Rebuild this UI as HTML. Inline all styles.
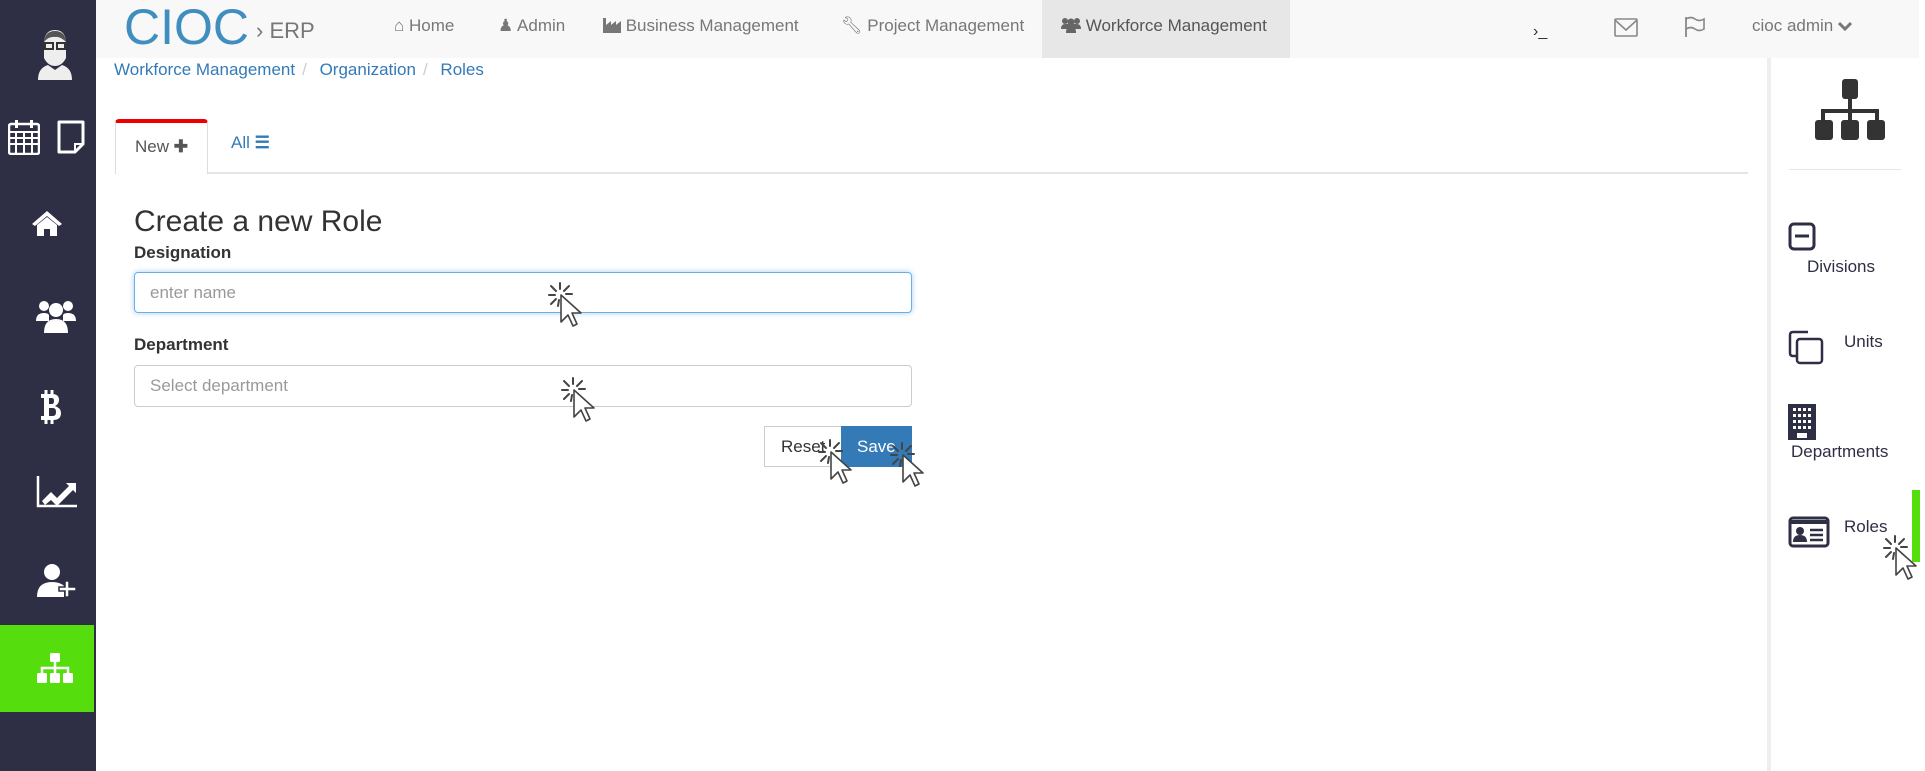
<!DOCTYPE html>
<html><head><meta charset="utf-8"><style>
*{box-sizing:border-box;margin:0;padding:0}
body{width:1925px;height:771px;position:relative;overflow:hidden;background:#fff;font-family:"Liberation Sans",sans-serif;color:#333}
.abs{position:absolute}
#side{left:0;top:0;width:96px;height:771px;background:#2e2e44}
#top{left:96px;top:0;width:1823px;height:58px;background:#f8f8f8}
.nav{position:absolute;top:0;height:58px;line-height:52px;font-size:17px;color:#777;white-space:nowrap}
.bc{top:60px;left:114px;font-size:17px;color:#337ab7}
.bc span{color:#ccc;margin:0 8px 0 7px}
.inp{border:1px solid #ccc;border-radius:4px;font-size:17px;color:#999;padding-left:15px;line-height:39px}
.lbl{font-weight:bold;font-size:17px;color:#333}
.rt{font-size:17px;color:#2e2e44}
</style></head><body>
<div id="side" class="abs"></div>
<div class="abs" style="left:0;top:625px;width:94px;height:87px;background:#55dd0e"></div>
<svg class="abs" style="left:36px;top:28px" width="38" height="52" viewBox="0 0 38 52"><path d="M8 16 Q8 2 19 2 Q30 2 30 16 L30 30 Q26 38 19 38 Q12 38 8 30Z" fill="#eee"/><path d="M8 14 Q9 3 19 3 Q29 3 30 14 Q24 8 19 9 Q13 8 8 14Z" fill="#555"/><rect x="9" y="15" width="8" height="6" fill="none" stroke="#333" stroke-width="2"/><rect x="21" y="15" width="8" height="6" fill="none" stroke="#333" stroke-width="2"/><path d="M2 52 Q2 40 12 37 L19 42 L26 37 Q36 40 36 52Z" fill="#eee"/></svg>
<svg class="abs" style="left:8px;top:119px" width="32" height="36" viewBox="0 0 32 36"><rect x="1" y="5" width="30" height="30" rx="2" fill="none" stroke="#fff" stroke-width="2.5"/><rect x="7" y="1" width="3" height="8" fill="#fff"/><rect x="22" y="1" width="3" height="8" fill="#fff"/><path d="M1 13H31M1 19H31M1 25H31M8 13V35M16 13V35M24 13V35" stroke="#fff" stroke-width="2"/></svg>
<svg class="abs" style="left:56px;top:120px" width="30" height="34" viewBox="0 0 30 34"><path d="M3 2H27V24L19 32H3Z" fill="none" stroke="#fff" stroke-width="3" stroke-linejoin="round"/><path d="M19 32V24H27" fill="none" stroke="#fff" stroke-width="2"/></svg>
<svg class="abs" style="left:31px;top:209px" width="32" height="28" viewBox="0 0 32 28"><path d="M16 2 L1 15 L4 17 L16 7 L28 17 L31 15Z" fill="#fff"/><path d="M6 16 L16 8 L26 16 V27 H19 V20 H13 V27 H6Z" fill="#fff"/></svg>
<svg class="abs" style="left:36px;top:299px" width="40" height="36" viewBox="0 0 40 36"><circle cx="8" cy="7" r="5" fill="#fff"/><circle cx="32" cy="7" r="5" fill="#fff"/><circle cx="20" cy="11" r="7" fill="#fff"/><path d="M0 22 Q0 14 8 14 Q12 14 13 16 L13 22Z M40 22 Q40 14 32 14 Q28 14 27 16 L27 22Z" fill="#fff"/><path d="M8 34 Q8 20 20 20 Q32 20 32 34Z" fill="#fff"/></svg>
<svg class="abs" style="left:38px;top:390px" width="24" height="34" viewBox="0 0 24 34"><path d="M8 0V5M14 0V5M8 29V34M14 29V34" stroke="#fff" stroke-width="3"/><path d="M3 4H14Q21 4 21 10Q21 14 17 16Q23 18 23 23Q23 30 15 30H3V26H6V8H3Z M11 8V14H14Q16 14 16 11Q16 8 14 8Z M11 18V26H15Q18 26 18 22Q18 18 15 18Z" fill="#fff" fill-rule="evenodd"/></svg>
<svg class="abs" style="left:36px;top:475px" width="42" height="34" viewBox="0 0 42 34"><path d="M2 1 V31 H41" fill="none" stroke="#fff" stroke-width="2.5"/><path d="M6 26 L15 17 L21 23 L33 11 L30 8 H40 V18 L37 15 L21 31 L15 25 L9 30Z" fill="#fff"/></svg>
<svg class="abs" style="left:36px;top:563px" width="42" height="36" viewBox="0 0 42 36"><circle cx="16" cy="9" r="8" fill="#fff"/><path d="M1 34 Q1 19 16 19 Q24 19 28 23 V34Z" fill="#fff"/><path d="M29 18 H33 V24 H40 V28 H33 V34 H29 V28 H23 V24 H29Z" fill="#fff" stroke="#2e2e44" stroke-width="1.5"/></svg>
<svg class="abs" style="left:36px;top:652px" width="38" height="32" viewBox="0 0 38 32"><rect x="14" y="1" width="10" height="9" rx="1.5" fill="#fff"/><path d="M19 10V16M6 22V16H32V22M19 16V22" stroke="#fff" stroke-width="2.5" fill="none"/><rect x="1" y="21" width="10" height="10" rx="1.5" fill="#fff"/><rect x="14" y="21" width="10" height="10" rx="1.5" fill="#fff"/><rect x="27" y="21" width="10" height="10" rx="1.5" fill="#fff"/></svg>

<div id="top" class="abs"></div>
<div class="abs" style="left:124px;top:2px;font-size:50px;color:#3f8ebf;line-height:50px">CIOC</div>
<div class="abs" style="left:256px;top:18px;font-size:22px;color:#777">› ERP</div>
<div class="nav" style="left:394px">&#8962; Home</div>
<div class="nav" style="left:498px">&#9823; Admin</div>
<div class="nav" style="left:603px"><svg width="18" height="16" viewBox="0 0 18 16" style="vertical-align:-2px"><path d="M0 16V1H3V8L8 4V8L13 4V8L18 4V16Z" fill="#777"/></svg> Business Management</div>
<div class="nav" style="left:841px">&#128295;&#xFE0E; Project Management</div>
<div class="nav" style="left:1042px;width:248px;background:#e7e7e7;padding-left:19px;color:#555"><svg width="20" height="16" viewBox="0 0 20 16" style="vertical-align:-2px"><circle cx="4" cy="4" r="3" fill="#666"/><circle cx="16" cy="4" r="3" fill="#666"/><circle cx="10" cy="5" r="3.5" fill="#666"/><path d="M0 12Q0 7 4 7H16Q20 7 20 12ZM5 16Q5 9 10 9Q15 9 15 16Z" fill="#666"/></svg> Workforce Management</div>
<div class="nav" style="left:1533px;font-size:16px;color:#333;top:6px">&#8250;_</div>
<svg class="abs" style="left:1614px;top:18px" width="24" height="20" viewBox="0 0 24 20"><rect x="1" y="1" width="22" height="17" rx="1" fill="none" stroke="#888" stroke-width="1.6"/><path d="M1 2 L12 12 L23 2" fill="none" stroke="#888" stroke-width="1.6"/></svg>
<svg class="abs" style="left:1684px;top:16px" width="22" height="22" viewBox="0 0 22 22"><path d="M2 1V21" stroke="#888" stroke-width="1.8"/><path d="M2 3 Q7 0 11 3 Q15 6 20 3 V13 Q15 16 11 13 Q7 10 2 13" fill="none" stroke="#888" stroke-width="1.6"/></svg>
<div class="nav" style="left:1752px">cioc admin <svg width="14" height="10" viewBox="0 0 14 10"><path d="M1 2L7 8L13 2" fill="none" stroke="#777" stroke-width="3"/></svg></div>

<div class="abs bc">Workforce Management<span>/</span> Organization<span>/</span> Roles</div>

<div class="abs" style="left:115px;top:172px;width:1633px;height:2px;background:#e5e5e5"></div>
<div class="abs" style="left:115px;top:119px;width:93px;height:55px;background:#fff;border:1px solid #ddd;border-top:4px solid #e00;border-bottom:none;border-radius:4px 4px 0 0;font-size:17px;color:#555;padding:14px 0 0 19px">New <b>&#10010;</b></div>
<div class="abs" style="left:231px;top:133px;font-size:17px;color:#337ab7">All <b>&#9776;</b></div>

<div class="abs" style="left:134px;top:205px;font-size:30px;color:#333">Create a new Role</div>
<div class="abs lbl" style="left:134px;top:243px">Designation</div>
<div class="abs inp" style="left:134px;top:272px;width:778px;height:41px;border-color:#66afe9;box-shadow:0 0 6px rgba(102,175,233,.6)">enter name</div>
<div class="abs lbl" style="left:134px;top:335px">Department</div>
<div class="abs inp" style="left:134px;top:365px;width:778px;height:42px">Select department</div>
<div class="abs" style="left:764px;top:426px;width:78px;height:41px;border:1px solid #ccc;font-size:17px;color:#333;line-height:39px;padding-left:16px">Reset</div>
<div class="abs" style="left:841px;top:426px;width:71px;height:41px;background:#337ab7;font-size:17px;color:#fff;line-height:41px;padding-left:16px">Save</div>

<div class="abs" style="left:1767px;top:58px;width:4px;height:713px;background:#eee"></div>
<svg class="abs" style="left:1814px;top:78px" width="72" height="62" viewBox="0 0 72 62"><rect x="28" y="1" width="16" height="20" rx="3" fill="#333"/><path d="M36 20V33M9 45V33H63V45M36 33V45" stroke="#333" stroke-width="4" fill="none"/><rect x="1" y="42" width="18" height="20" rx="3" fill="#333"/><rect x="27" y="42" width="18" height="20" rx="3" fill="#333"/><rect x="53" y="42" width="18" height="20" rx="3" fill="#333"/></svg>
<div class="abs" style="left:1789px;top:169px;width:112px;height:1px;background:#e5e5e5"></div>
<svg class="abs" style="left:1788px;top:222px" width="28" height="29" viewBox="0 0 28 29"><rect x="2" y="2" width="24" height="25" rx="4" fill="none" stroke="#2e2e44" stroke-width="3"/><path d="M7 14H21" stroke="#2e2e44" stroke-width="3"/></svg>
<div class="abs rt" style="left:1807px;top:257px">Divisions</div>
<svg class="abs" style="left:1788px;top:329px" width="36" height="36" viewBox="0 0 36 36"><path d="M20 3H5Q2 3 2 6V24Q2 27 5 27H8" fill="none" stroke="#2e2e44" stroke-width="2.5"/><rect x="9" y="10" width="25" height="24" rx="3" fill="none" stroke="#2e2e44" stroke-width="2.5"/></svg>
<div class="abs rt" style="left:1844px;top:332px">Units</div>
<svg class="abs" style="left:1788px;top:404px" width="28" height="36" viewBox="0 0 28 36"><rect x="0" y="0" width="28" height="36" fill="#2e2e44"/><g fill="#fff"><rect x="5" y="4" width="3" height="3"/><rect x="10" y="4" width="3" height="3"/><rect x="15" y="4" width="3" height="3"/><rect x="20" y="4" width="3" height="3"/><rect x="5" y="10" width="3" height="3"/><rect x="10" y="10" width="3" height="3"/><rect x="15" y="10" width="3" height="3"/><rect x="20" y="10" width="3" height="3"/><rect x="5" y="16" width="3" height="3"/><rect x="10" y="16" width="3" height="3"/><rect x="15" y="16" width="3" height="3"/><rect x="20" y="16" width="3" height="3"/><rect x="5" y="22" width="3" height="3"/><rect x="10" y="22" width="3" height="3"/><rect x="15" y="22" width="3" height="3"/><rect x="20" y="22" width="3" height="3"/><rect x="9" y="29" width="10" height="5"/></g></svg>
<div class="abs rt" style="left:1791px;top:442px">Departments</div>
<svg class="abs" style="left:1788px;top:516px" width="42" height="32" viewBox="0 0 42 32"><rect x="2" y="2" width="38" height="28" rx="3" fill="none" stroke="#2e2e44" stroke-width="3"/><path d="M2 6H40" stroke="#2e2e44" stroke-width="4"/><circle cx="12" cy="15" r="4" fill="#2e2e44"/><path d="M5 26Q5 19 12 19Q19 19 19 26Z" fill="#2e2e44"/><path d="M22 14H35M22 19H35M22 24H35" stroke="#2e2e44" stroke-width="2.5"/></svg>
<div class="abs rt" style="left:1844px;top:517px">Roles</div>
<div class="abs" style="left:1912px;top:490px;width:8px;height:72px;background:#55dd0e"></div>

<svg width="0" height="0" style="position:absolute"><defs><g id="cur"><g stroke="#444" stroke-width="2" stroke-linecap="round"><path d="M0 -5V-11M-4 -3L-9 -8M-5 1H-11M-4 5L-9 10M4 -3L9 -8M6 0H12M-1 6L-2 12"/></g><path d="M1 1 L1 28 L8 21 L13 32 L17 30 L12 19 L21 19Z" fill="#fff" stroke="#444" stroke-width="1.6" stroke-linejoin="round"/></g></defs></svg>
<svg class="abs" style="left:538px;top:276px" width="56" height="56"><use href="#cur" x="22" y="18"/></svg>
<svg class="abs" style="left:551px;top:371px" width="56" height="56"><use href="#cur" x="22" y="18"/></svg>
<svg class="abs" style="left:808px;top:433px" width="56" height="56"><use href="#cur" x="22" y="18"/></svg>
<svg class="abs" style="left:880px;top:436px" width="56" height="56"><use href="#cur" x="22" y="18"/></svg>
<svg class="abs" style="left:1873px;top:529px" width="52" height="56"><use href="#cur" x="22" y="18"/></svg>
</body></html>
